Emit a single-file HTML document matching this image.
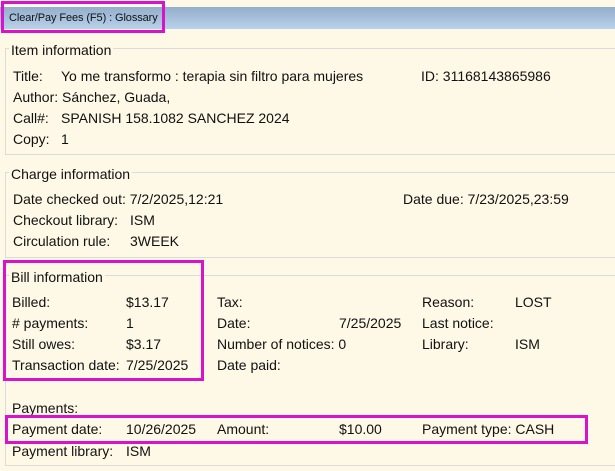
<!DOCTYPE html>
<html><head><style>
body{margin:0;width:615px;height:471px;background:#fef8e6;position:relative;overflow:hidden;font-family:"Liberation Sans",Arial,sans-serif;font-size:14px;color:#111;}
.t{position:absolute;white-space:nowrap;line-height:16px;}
.bar{position:absolute;left:0;top:7px;width:615px;height:22px;background:linear-gradient(#93aecc,#b9d1ea);}
.hl{position:absolute;border:3px solid #d913c9;box-sizing:border-box;}
.ln{position:absolute;background:#dcdcd6;}
.lg{background:#fef8e6;padding:0 2px;}
</style></head><body>
<div class="bar"></div>
<div class="t" style="left:9px;top:10px;font-size:11px;letter-spacing:-0.1px;">Clear/Pay Fees (F5) : Glossary</div>
<div class="hl" style="left:1px;top:1px;width:164px;height:32px;"></div>

<div class="ln" style="left:5px;top:48px;width:610px;height:1px"></div>
<div class="ln" style="left:5px;top:48px;width:1px;height:107px"></div>
<div class="ln" style="left:5px;top:154px;width:610px;height:1px"></div>
<div class="t lg" style="left:9px;top:42px;">Item information</div>
<div class="t" style="left:13px;top:68px;">Title:</div><div class="t" style="left:61px;top:68px;">Yo me transformo : terapia sin filtro para mujeres</div>
<div class="t" style="left:421px;top:68px;">ID: 31168143865986</div>
<div class="t" style="left:13px;top:89px;">Author: Sánchez, Guada,</div>
<div class="t" style="left:13px;top:110px;">Call#:</div><div class="t" style="left:61px;top:110px;">SPANISH 158.1082 SANCHEZ 2024</div>
<div class="t" style="left:13px;top:131px;">Copy:</div><div class="t" style="left:61px;top:131px;">1</div>

<div class="ln" style="left:5px;top:172px;width:610px;height:1px"></div>
<div class="ln" style="left:5px;top:172px;width:1px;height:86px"></div>
<div class="ln" style="left:5px;top:257px;width:610px;height:1px"></div>
<div class="t lg" style="left:9px;top:166px;">Charge information</div>
<div class="t" style="left:13px;top:191px;">Date checked out: 7/2/2025,12:21</div>
<div class="t" style="left:403px;top:191px;">Date due: 7/23/2025,23:59</div>
<div class="t" style="left:13px;top:212px;">Checkout library:</div><div class="t" style="left:130px;top:212px;">ISM</div>
<div class="t" style="left:13px;top:233px;">Circulation rule:</div><div class="t" style="left:130px;top:233px;">3WEEK</div>

<div class="ln" style="left:5px;top:275px;width:610px;height:1px"></div>
<div class="ln" style="left:5px;top:275px;width:1px;height:191px"></div>
<div class="ln" style="left:5px;top:465px;width:610px;height:1px"></div>
<div class="t lg" style="left:9px;top:269px;">Bill information</div>
<div class="t" style="left:12px;top:294px;">Billed:</div><div class="t" style="left:126px;top:294px;">$13.17</div>
<div class="t" style="left:12px;top:315px;"># payments:</div><div class="t" style="left:126px;top:315px;">1</div>
<div class="t" style="left:12px;top:336px;">Still owes:</div><div class="t" style="left:126px;top:336px;">$3.17</div>
<div class="t" style="left:12px;top:357px;">Transaction date:</div><div class="t" style="left:126px;top:357px;">7/25/2025</div>
<div class="t" style="left:217px;top:294px;">Tax:</div>
<div class="t" style="left:217px;top:315px;">Date:</div><div class="t" style="left:339px;top:315px;">7/25/2025</div>
<div class="t" style="left:217px;top:336px;">Number of notices: 0</div>
<div class="t" style="left:217px;top:357px;">Date paid:</div>
<div class="t" style="left:422px;top:294px;">Reason:</div><div class="t" style="left:515px;top:294px;">LOST</div>
<div class="t" style="left:422px;top:315px;">Last notice:</div>
<div class="t" style="left:422px;top:336px;">Library:</div><div class="t" style="left:515px;top:336px;">ISM</div>
<div class="hl" style="left:3px;top:260px;width:201px;height:121px;"></div>

<div class="t" style="left:12px;top:400px;">Payments:</div>
<div class="t" style="left:12px;top:421px;">Payment date:</div><div class="t" style="left:126px;top:421px;">10/26/2025</div>
<div class="t" style="left:217px;top:421px;">Amount:</div><div class="t" style="left:339px;top:421px;">$10.00</div>
<div class="t" style="left:422px;top:421px;">Payment type: CASH</div>
<div class="t" style="left:12px;top:443px;">Payment library:</div><div class="t" style="left:126px;top:443px;">ISM</div>
<div class="hl" style="left:5px;top:415px;width:583px;height:29px;"></div>
</body></html>
